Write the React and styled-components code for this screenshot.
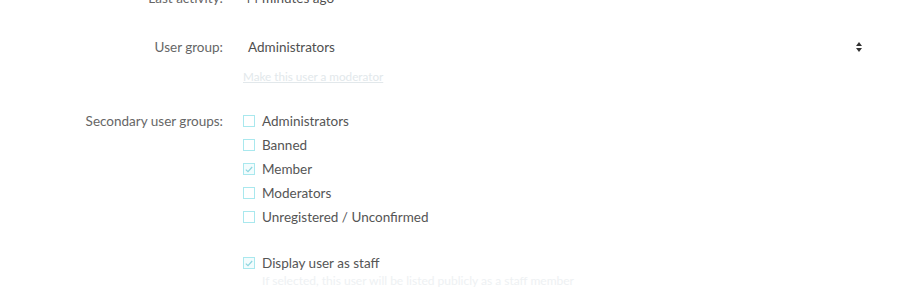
import React from 'react';
import styled, { createGlobalStyle } from 'styled-components';

const GlobalStyle = createGlobalStyle`
  body {
    margin: 0;
    background: #fff;
    font-family: 'Segoe UI', Lato, 'Noto Sans', sans-serif;
    font-size: 13.5px;
    color: #505050;
    overflow: hidden;
  }
`;

const Form = styled.div`
  display: flex;
  flex-direction: column;
  margin-top: -12px;
  padding-right: 49px;
`;

const Row = styled.div`
  display: grid;
  grid-template-columns: 223px 1fr;
  column-gap: 20px;
  margin-top: ${props => props.gap || 0}px;
`;

const Label = styled.div`
  text-align: right;
  color: #666;
  line-height: ${props => props.lh || 20}px;
`;

const Value = styled.div`
  display: flex;
  flex-direction: column;
  line-height: 20px;
`;

const Select = styled.div`
  display: flex;
  align-items: center;
  justify-content: space-between;
  height: 30px;
  padding: 0 8px 0 5px;
  color: #4f4f4f;
`;

const Explain = styled.a`
  color: #e2e8eb;
  font-size: 11.7px;
  text-decoration: underline;
  line-height: 16px;
  margin-top: 6px;
  cursor: pointer;
`;

const Hint = styled.div`
  color: #eef1f3;
  font-size: 12px;
  line-height: 16px;
  padding-left: 19px;
`;

const CheckRow = styled.label`
  display: flex;
  align-items: center;
  gap: 7px;
  height: ${props => props.h || 24}px;
  color: #555;
`;

const Box = styled.span`
  box-sizing: border-box;
  width: 12px;
  height: 12px;
  border: 1px solid #a9e8ee;
  display: flex;
  align-items: center;
  justify-content: center;
  background: ${props => (props.checked ? '#f2fcfd' : '#fff')};
`;

const Arrows = () => (
  <svg width="6" height="10" viewBox="0 0 6 10">
    <path d="M3 0 L6 4 L0 4 Z M3 10 L6 6 L0 6 Z" fill="#333" />
  </svg>
);

const Check = ({ checked, label, h }) => (
  <CheckRow h={h}>
    <Box checked={checked}>
      {checked && (
        <svg width="8" height="7" viewBox="0 0 8 7">
          <path d="M0.8 3.6 L3 5.6 L7.2 1" stroke="#8dd5df" strokeWidth="1.2" fill="none" />
        </svg>
      )}
    </Box>
    {label}
  </CheckRow>
);

const groups = [
  { name: 'Administrators', checked: false },
  { name: 'Banned', checked: false },
  { name: 'Member', checked: true },
  { name: 'Moderators', checked: false },
  { name: 'Unregistered / Unconfirmed', checked: false },
];

export default function App() {
  return (
    <>
      <GlobalStyle />
      <Form>
        <Row>
          <Label>Last activity:</Label>
          <Value>44 minutes ago</Value>
        </Row>

        <Row gap={24}>
          <Label lh={30}>User group:</Label>
          <Value>
            <Select>
              <span>Administrators</span>
              <Arrows />
            </Select>
            <Explain>Make this user a moderator</Explain>
          </Value>
        </Row>

        <Row gap={25}>
          <Label lh={24}>Secondary user groups:</Label>
          <Value>
            {groups.map(g => (
              <Check key={g.name} checked={g.checked} label={g.name} />
            ))}
          </Value>
        </Row>

        <Row gap={24}>
          <Label />
          <Value>
            <Check checked label="Display user as staff" h={20} />
            <Hint>If selected, this user will be listed publicly as a staff member</Hint>
          </Value>
        </Row>
      </Form>
    </>
  );
}
